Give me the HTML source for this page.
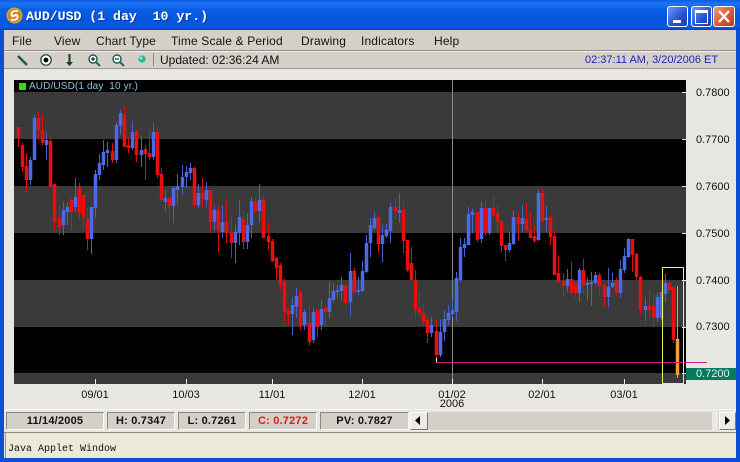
<!DOCTYPE html>
<html><head><meta charset="utf-8"><style>
html,body{margin:0;padding:0;width:740px;height:462px;overflow:hidden;background:#0a4fd6}
div,span{position:absolute;white-space:pre}
body{font-family:"Liberation Sans",sans-serif;color:#111}
.m{top:34px;font-size:12px;line-height:14px;color:#111;letter-spacing:.15px}
.a{left:696px;font-size:11px;line-height:12px;color:#111}
.d{font-size:11px;line-height:12px;color:#111;text-align:center;width:50px}
.s{top:412px;height:16px;line-height:16px;background:#d4d0c8;border:1px solid;border-color:#8a8780 #fff #fff #8a8780;font-size:11px;font-weight:bold;text-align:center;letter-spacing:.2px}
.b{width:19px;height:19px;top:6px;border:1px solid #fff;border-radius:3px;background:linear-gradient(135deg,#6f9cf0,#2350d0 60%,#1a3fb8)}
</style></head><body>
<div style="left:0;top:0;width:740px;height:30px;background:linear-gradient(180deg,#0a5be0 0,#1f74f5 12%,#0a5fe6 30%,#0656dc 70%,#0a5ae4 90%,#0542c4 100%)"></div>
<svg style="position:absolute;left:6px;top:7px" width="17" height="17" viewBox="0 0 17 17"><circle cx="8.5" cy="8.5" r="8" fill="#e0a52c"/><circle cx="8.5" cy="8.5" r="6.5" fill="#c88a1c"/><path d="M12 4.5C8 3 5 5 5.5 8C6 10 9 9 9.5 8M5 12.5C9 14 12 12 11.5 9C11 7 8 8 7.5 9" fill="none" stroke="#fff" stroke-width="1.8"/></svg>
<div style="left:26px;top:9px;font:bold 13.2px/15px 'Liberation Mono',monospace;color:#fff;text-shadow:1px 1px 0 #0a3a9c">AUD/USD (1 day  10 yr.)</div>
<div class="b" style="left:667px"><div style="left:5px;top:13px;width:8px;height:3px;background:#fff"></div></div>
<div class="b" style="left:691px"><div style="left:3px;top:3px;width:11px;height:10px;border:1px solid #fff;border-top-width:3px"></div></div>
<div class="b" style="left:713px;width:20px;background:linear-gradient(135deg,#ec9a80,#d8522c 60%,#b83c18)"><svg style="position:absolute;left:3px;top:3px" width="14" height="13"><path d="M2 1L12 12M12 1L2 12" stroke="#fff" stroke-width="2.4"/></svg></div>

<div style="left:4px;top:30px;width:732px;height:428px;background:#e8e6e1"></div>
<div style="left:4px;top:30px;width:732px;height:21px;background:#d4d0c8"></div>
<div style="left:4px;top:50px;width:732px;height:1px;background:#8f8d86"></div>
<div style="left:4px;top:51px;width:732px;height:17px;background:#d4d0c8;border-top:1px solid #f4f2ee"></div>
<div style="left:4px;top:68px;width:732px;height:1px;background:#9a9892"></div>

<span class="m" style="left:12px">File</span>
<span class="m" style="left:54px">View</span>
<span class="m" style="left:96px">Chart Type</span>
<span class="m" style="left:171px">Time Scale &amp; Period</span>
<span class="m" style="left:301px">Drawing</span>
<span class="m" style="left:361px">Indicators</span>
<span class="m" style="left:434px">Help</span>

<svg style="position:absolute;left:0;top:50px" width="156" height="18" viewBox="0 50 156 18">
<path d="M18 56L27 65" stroke="#1c5a50" stroke-width="2.6"/>
<circle cx="46" cy="60" r="5.2" fill="#fff" stroke="#123c38" stroke-width="1.2"/><circle cx="46" cy="60" r="2.4" fill="#000"/>
<path d="M69.500 54V63" stroke="#123c30" stroke-width="2"/><path d="M66 62H73L69.500 66Z" fill="#123c30"/>
<circle cx="93" cy="59" r="4" fill="#fff" stroke="#1c5a50" stroke-width="1.4"/><path d="M91 59H95M93 57V61" stroke="#000"/><path d="M96 62L100 66" stroke="#1c6a60" stroke-width="2"/>
<circle cx="117" cy="59" r="4" fill="#fff" stroke="#1c5a50" stroke-width="1.4"/><path d="M115 59H119" stroke="#000"/><path d="M120 62L124 66" stroke="#1c6a60" stroke-width="2"/>
<circle cx="142" cy="59" r="3.600" fill="#20b890"/><circle cx="141" cy="58" r="1.500" fill="#90e8d0"/>
<path d="M153.500 53V66" stroke="#8a8780"/>
</svg>
<span style="left:160px;top:53px;font-size:12px;line-height:14px">Updated: 02:36:24 AM</span>
<span style="left:585px;top:54px;font-size:11px;line-height:13px;color:#2222b8">02:37:11 AM, 3/20/2006 ET</span>

<svg style="position:absolute;left:0;top:0" width="740" height="462" viewBox="0 0 740 462" shape-rendering="crispEdges">
<rect x="14" y="80" width="672" height="304" fill="#000"/>
<rect x="14" y="92" width="672" height="47" fill="#3a3a3a"/>
<rect x="14" y="186" width="672" height="47" fill="#3a3a3a"/>
<rect x="14" y="280" width="672" height="47" fill="#3a3a3a"/>
<rect x="14" y="373" width="672" height="11" fill="#3a3a3a"/>
<path d="M452.500 80V384" stroke="#8a8a8a"/>
<path d="M95.500 379V384M186.500 379V384M272.500 379V384M362.500 379V384M452.500 379V384M542.500 379V384M624.500 379V384" stroke="#e8e8e8"/>
<path d="M682 92.500H686M682 139.500H686M682 186.500H686M682 233.500H686M682 280.500H686M682 327.500H686M682 373.500H686" stroke="#e8e8e8"/>
<rect x="686" y="368" width="50" height="12" fill="#067a5c"/>
<g shape-rendering="auto">
<path stroke="#d81010" fill="none" d="M18.500 127V147M22.500 143V172M26.500 153V193M38.500 112V140M42.500 115V145M50.500 137V187M54.500 184V230M59.500 205V235M71.500 198V230M79.500 183V220M83.500 195V227M87.500 207V250M112.500 143V163M124.500 105V147M128.500 137V153M136.500 130V162M145.500 145V180M149.500 128V160M157.500 127V178M161.500 168V202M169.500 198V220M194.500 167V207M202.500 178V208M210.500 190V231M218.500 205V252M226.500 200V243M231.500 215V258M243.500 212V249M255.500 198V213M263.500 195V238M268.500 222V250M272.500 239V262M276.500 257V280M280.500 263V290M284.500 279V323M288.500 307V325M300.500 290V330M309.500 305V345M317.500 309V337M325.500 305V327M345.500 285V305M354.500 268V293M378.500 215V253M395.500 198V220M403.500 202V253M407.500 240V272M411.500 247V280M415.500 270V318M419.500 292V317M423.500 305V325M427.500 315V343M436.500 320V358M477.500 211V242M485.500 201V235M493.500 195V217M497.500 203V233M501.500 220V252M505.500 245V261M518.500 212V241M526.500 203V232M530.500 212V238M534.500 225V243M542.500 188V222M550.500 215V245M554.500 232V275M558.500 256V283M563.500 273V296M571.500 262V295M575.500 282V298M583.500 259V294M599.500 273V295M604.500 283V308M616.500 278V296M632.500 239V272M636.500 253V280M640.500 276V315M649.500 290V317M653.500 295V327M669.500 282V292M673.500 285V343"/>
<path stroke="#4a62c8" fill="none" d="M30.500 157V185M34.500 115V160M46.500 132V160M63.500 202V235M67.500 202V225M75.500 178V212M91.500 207V254M95.500 170V218M99.500 154V180M103.500 140V170M107.500 142V167M116.500 122V163M120.500 110V135M132.500 121V150M141.500 136V167M153.500 123V160M165.500 190V212M173.500 186V223M177.500 174V205M182.500 165V195M186.500 166V188M190.500 163V180M198.500 184V208M206.500 182V207M214.500 205V231M222.500 205V238M235.500 225V263M239.500 200V245M247.500 213V249M251.500 197V238M259.500 184V223M292.500 297V335M296.500 288V318M304.500 309V330M313.500 308V343M321.500 300V330M329.500 281V318M333.500 283V302M337.500 285V298M341.500 277V300M350.500 253V317M358.500 277V295M362.500 261V292M366.500 235V273M370.500 218V257M374.500 212V230M382.500 225V262M386.500 224V238M390.500 202V243M399.500 193V223M431.500 317V337M440.500 320V357M444.500 310V341M448.500 305V325M452.500 298V317M456.500 272V321M460.500 238V282M464.500 238V257M468.500 207V245M472.500 209V233M481.500 201V243M489.500 208V235M509.500 232V252M513.500 210V245M522.500 205V232M538.500 190V241M546.500 206V232M567.500 269V292M579.500 268V302M587.500 278V300M591.500 272V306M595.500 272V285M608.500 268V307M612.500 273V288M620.500 260V298M624.500 248V273M628.500 238V258M645.500 297V321M657.500 293V322M661.500 292V320M665.500 274V302"/>
<path stroke="#e80f0f" stroke-width="3.500" fill="none" d="M18.500 127V138M22.500 145V167M26.500 166V180M38.500 118V130M42.500 130V143M50.500 141V187M54.500 184V222M59.500 218V227M71.500 200V212M79.500 187V213M83.500 195V218M87.500 219V239M112.500 151V160M124.500 115V147M128.500 145V148M136.500 131V155M145.500 149V154M149.500 153V157M157.500 132V175M161.500 174V200M169.500 198V206M194.500 168V205M202.500 193V199M210.500 190V222M218.500 210V231M226.500 222V233M231.500 232V243M243.500 219V242M255.500 202V211M263.500 200V238M268.500 236V242M272.500 241V261M276.500 258V268M280.500 265V285M284.500 282V312M288.500 310V314M300.500 292V325M309.500 323V342M317.500 310V327M325.500 308V312M345.500 285V303M354.500 271V292M378.500 217V244M395.500 207V211M403.500 210V241M407.500 240V270M411.500 263V280M415.500 280V310M419.500 308V313M423.500 313V322M427.500 320V333M436.500 331V355M477.500 212V240M485.500 208V233M493.500 208V215M497.500 213V222M501.500 221V246M505.500 245V250M518.500 217V224M526.500 219V230M530.500 230V238M534.500 236V241M542.500 193V221M550.500 217V237M554.500 236V275M558.500 273V282M563.500 281V286M571.500 279V293M575.500 283V293M583.500 270V285M599.500 275V286M604.500 285V297M616.500 280V293M632.500 239V255M636.500 254V277M640.500 277V310M649.500 306V310M653.500 306V318M669.500 283V290M673.500 287V340"/>
<path stroke="#4c6ae8" stroke-width="3.500" fill="none" d="M30.500 160V180M34.500 118V160M46.500 140V145M63.500 210V225M67.500 207V212M75.500 197V207M91.500 207V239M95.500 174V208M99.500 163V175M103.500 152V165M107.500 150V153M116.500 125V160M120.500 113V126M132.500 132V148M141.500 150V155M153.500 132V157M165.500 198V202M173.500 188V206M177.500 186V190M182.500 177V187M186.500 172V177M190.500 168V173M198.500 193V205M206.500 190V200M214.500 210V222M222.500 222V232M235.500 232V243M239.500 217V233M247.500 225V242M251.500 201V225M259.500 200V211M292.500 305V314M296.500 296V307M304.500 312V325M313.500 312V340M321.500 309V325M329.500 298V312M333.500 291V300M337.500 290V292M341.500 285V291M350.500 271V302M358.500 290V292M362.500 271V291M366.500 243V272M370.500 225V243M374.500 218V228M382.500 235V244M386.500 230V236M390.500 207V231M399.500 210V213M431.500 325V333M440.500 332V355M444.500 319V332M448.500 313V320M452.500 310V314M456.500 278V312M460.500 247V280M464.500 244V248M468.500 214V245M472.500 212V215M481.500 208V239M489.500 208V233M509.500 243V250M513.500 217V244M522.500 218V224M538.500 193V240M546.500 218V220M567.500 279V286M579.500 270V293M587.500 283V285M591.500 282V284M595.500 275V283M608.500 287V297M612.500 283V287M620.500 269V293M624.500 256V270M628.500 239V257M645.500 306V310M657.500 297V318M661.500 292V318M665.500 283V294"/>
<path stroke="#e8a030" fill="none" d="M677.500 286V378"/>
<path stroke="#f0a030" stroke-width="3.500" fill="none" d="M677.500 339V375"/>
</g>
<path stroke="#d02080" fill="none" d="M436 362.500H707"/>
<path stroke="#fff" fill="none" d="M436.500 358V362"/>
<rect x="662.500" y="267.500" width="21" height="116" fill="none" stroke="#f0f060"/>
<rect x="19" y="83" width="7" height="7" fill="#30e010"/>
</svg>
<span style="left:29px;top:81px;font-size:10px;line-height:12px;color:#8cc4d8;letter-spacing:.13px">AUD/USD(1 day  10 yr.)</span>

<span class="a" style="top:87px">0.7800</span>
<span class="a" style="top:134px">0.7700</span>
<span class="a" style="top:181px">0.7600</span>
<span class="a" style="top:228px">0.7500</span>
<span class="a" style="top:275px">0.7400</span>
<span class="a" style="top:321px">0.7300</span>
<span class="a" style="top:368px;color:#e4f4ee">0.7200</span>
<span class="d" style="left:70px;top:389px">09/01</span>
<span class="d" style="left:161px;top:389px">10/03</span>
<span class="d" style="left:247px;top:389px">11/01</span>
<span class="d" style="left:337px;top:389px">12/01</span>
<span class="d" style="left:427px;top:389px">01/02</span>
<span class="d" style="left:427px;top:398px">2006</span>
<span class="d" style="left:517px;top:389px">02/01</span>
<span class="d" style="left:599px;top:389px">03/01</span>

<div style="left:4px;top:409px;width:732px;height:1px;background:#f6f4f0"></div>
<div class="s" style="left:6px;width:96px">11/14/2005</div>
<div class="s" style="left:107px;width:66px">H: 0.7347</div>
<div class="s" style="left:178px;width:66px">L: 0.7261</div>
<div class="s" style="left:249px;width:66px;color:#e01818">C: 0.7272</div>
<div class="s" style="left:320px;width:87px">PV: 0.7827</div>
<div style="left:410px;top:412px;width:325px;height:18px;background:#d4d0c8"></div>
<div style="left:410px;top:412px;width:16px;height:16px;background:#eceae4;border:1px solid;border-color:#fff #777 #777 #fff"></div>
<svg style="position:absolute;left:414px;top:416px" width="8" height="9"><path d="M6 0V9L1 4.500Z" fill="#000"/></svg>
<div style="left:712px;top:412px;width:6px;height:18px;background:#eceae4"></div>
<div style="left:719px;top:412px;width:15px;height:16px;background:#eceae4;border:1px solid;border-color:#fff #777 #777 #fff"></div>
<svg style="position:absolute;left:723px;top:416px" width="8" height="9"><path d="M2 0V9L7 4.500Z" fill="#000"/></svg>

<div style="left:4px;top:432px;width:732px;height:26px;background:#ece9d8;border-top:1px solid #8f8d86;box-sizing:border-box"></div>
<div style="left:5px;top:433px;width:1px;height:25px;background:#9a9892"></div>
<span style="left:8px;top:444px;font:10px/12px 'Liberation Mono',monospace;color:#111">Java Applet Window</span>
</body></html>
